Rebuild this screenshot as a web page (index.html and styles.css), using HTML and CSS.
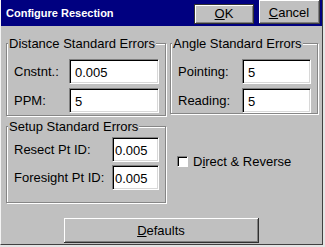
FILE: index.html
```html
<!DOCTYPE html>
<html>
<head>
<meta charset="utf-8">
<link rel="stylesheet" href="styles.css">
</head>
<body>
<div class="dialog">
  <div class="titlebar">
    <span class="title">Configure Resection</span>
    <button class="tbtn ok"><u>O</u>K</button>
    <button class="tbtn cancel"><u>C</u>ancel</button>
  </div>
  <div class="content">
    <div class="row top">
      <fieldset class="group dist">
        <legend>Distance Standard Errors</legend>
        <div class="field"><span class="lbl">Cnstnt.:</span><input class="box w90" value="0.005"></div>
        <div class="field"><span class="lbl">PPM:</span><input class="box w90" value="5"></div>
      </fieldset>
      <fieldset class="group angle">
        <legend>Angle Standard Errors</legend>
        <div class="field"><span class="lbl">Pointing:</span><input class="box w69" value="5"></div>
        <div class="field"><span class="lbl">Reading:</span><input class="box w69" value="5"></div>
      </fieldset>
    </div>
    <div class="row bottom">
      <fieldset class="group setup">
        <legend>Setup Standard Errors</legend>
        <div class="field"><span class="lbl">Resect Pt ID:</span><input class="box w46" value="0.005"></div>
        <div class="field"><span class="lbl">Foresight Pt ID:</span><input class="box w46" value="0.005"></div>
      </fieldset>
      <label class="check"><span class="cbox"></span><span>D<u>i</u>rect &amp; Reverse</span></label>
    </div>
    <button class="defaults"><u>D</u>efaults</button>
  </div>
</div>
</body>
</html>
```

FILE: styles.css
```css
html, body {
  margin: 0;
  padding: 0;
  background: #e4e4e4;
}
body {
  width: 325px;
  height: 247px;
  overflow: hidden;
  font-family: "Liberation Sans", Arial, sans-serif;
  font-size: 13px;
  color: #000;
}
.dialog {
  width: 321px;
  height: 244px;
  background: #c0c0c0;
  border-left: 1px solid #f4f4f4;
  border-right: 1px solid #404040;
  border-bottom: 1px solid #404040;
  display: flex;
  flex-direction: column;
}
.titlebar {
  height: 26px;
  background: #000080;
  display: flex;
  align-items: flex-start;
  flex: none;
}
.title {
  flex: 1;
  color: #fff;
  font-weight: bold;
  font-size: 11px;
  line-height: 14px;
  padding: 6px 0 0 5px;
}
.tbtn {
  font-family: inherit;
  font-size: 13px;
  color: #000;
  background: #c0c0c0;
  padding: 0;
  height: 20px;
  width: 60px;
  line-height: 16px;
}
.tbtn u, .defaults u, .check u { text-decoration: underline; }
.ok {
  margin-top: 4px;
  border: 1px solid #303030;
  box-shadow: inset 1px 1px 0 #fff, inset -1px -1px 0 #808080;
}
.cancel {
  margin: 0 2px 0 5px;
  height: 24px;
  width: 61px;
  padding-top: 3px;
  border: none;
  border-right: 1px solid #404040;
  border-bottom: 1px solid #404040;
  box-shadow: inset 1px 1px 0 #fff, inset -1px -1px 0 #808080;
}
.content {
  padding: 10px 0 0 5px;
  display: flex;
  flex-direction: column;
}
.row {
  display: flex;
}
.top { gap: 4px; }
.group {
  margin: 0;
  min-width: 0;
  border: 1px solid #868686;
  box-shadow: 1px 1px 0 #fff, inset 1px 1px 0 #fff;
  padding: 0 6px 3px 7px;
  display: flex;
  flex-direction: column;
  gap: 4px;
  box-sizing: border-box;
}
.group legend {
  padding: 0 1px;
  margin-left: -6px;
  line-height: 15px;
  white-space: nowrap;
  background: #c0c0c0;
}
.dist { width: 160px; height: 80px; padding-top: 8px; }
.angle { width: 148px; height: 78px; padding-top: 8px; }
.setup { width: 160px; height: 84px; padding-top: 3px; margin-top: 3px; gap: 3px; }
.field {
  display: flex;
  align-items: center;
  justify-content: space-between;
}
.lbl { white-space: nowrap; }
.box {
  font-family: inherit;
  font-size: 13px;
  height: 25px;
  box-sizing: border-box;
  background: #fff;
  border: 1px solid;
  border-color: #808080 #fff #fff #808080;
  box-shadow: inset 1px 1px 0 #000, inset -1px -1px 0 #d8d8d8;
  padding: 1px 0 0 5px;
  outline: none;
  color: #000;
}
.w90 { width: 90px; }
.w69 { width: 69px; }
.w46 { width: 47px; padding-left: 2px; }
.check {
  margin: 38px 0 0 11px;
  display: flex;
  align-items: center;
  gap: 5px;
  height: 14px;
}
.cbox {
  width: 11px;
  height: 11px;
  box-sizing: border-box;
  background: #fff;
  border: 1px solid;
  border-color: #808080 #fff #fff #808080;
  box-shadow: inset 1px 1px 0 #000;
}
.defaults {
  margin: 15px 0 0 58px;
  width: 195px;
  height: 25px;
  font-family: inherit;
  font-size: 13px;
  color: #000;
  background: #c0c0c0;
  border: none;
  border-right: 1px solid #303030;
  border-bottom: 1px solid #303030;
  box-shadow: inset 1px 1px 0 #fff, inset -1px -1px 0 #808080;
  padding: 0;
}
```
